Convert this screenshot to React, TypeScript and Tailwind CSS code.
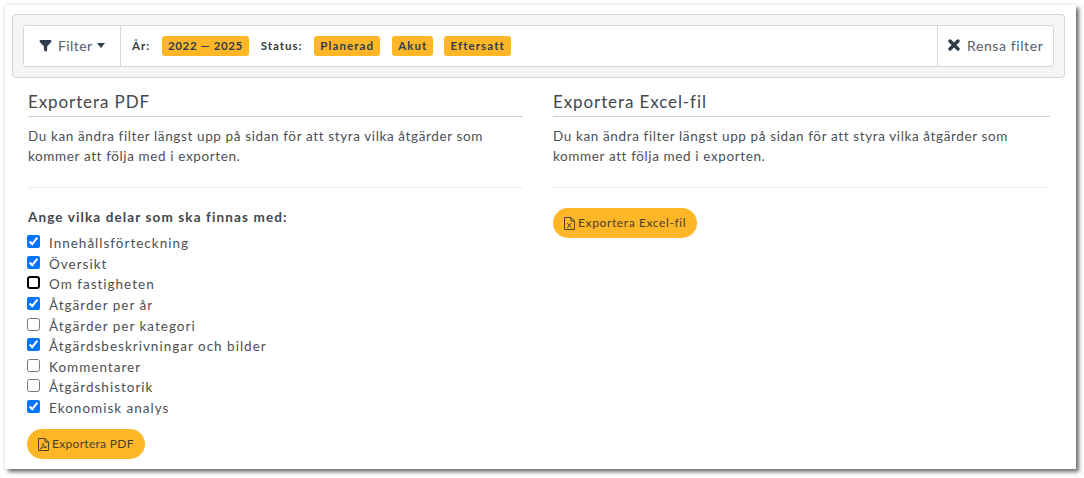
import React from 'react';
import { Filter } from 'lucide-react';

const parts = [
  { label: 'Innehållsförteckning', checked: true },
  { label: 'Översikt', checked: true },
  { label: 'Om fastigheten', checked: false, focused: true },
  { label: 'Åtgärder per år', checked: true },
  { label: 'Åtgärder per kategori', checked: false },
  { label: 'Åtgärdsbeskrivningar och bilder', checked: true },
  { label: 'Kommentarer', checked: false },
  { label: 'Åtgärdshistorik', checked: false },
  { label: 'Ekonomisk analys', checked: true }
];

function Badge({ text, narrow }: { text: string; narrow?: boolean }) {
  return (
    <span className={`h-[20px] px-[6px] flex items-center rounded-[3px] bg-[#ffb727] text-[11.5px] font-bold text-[#2f3c4a] ${narrow ? 'tracking-[0.6px]' : 'tracking-[1.1px]'}`}>
      {text}
    </span>
  );
}

function FileIcon({ kind }: { kind: 'pdf' | 'excel' }) {
  return (
    <svg width="11" height="13" viewBox="0 0 11 13" fill="none" stroke="#4a4028" strokeWidth="1" className="shrink-0">
      <path d="M0.5 0.5H7L10.5 4V12.5H0.5Z" />
      <path d="M7 0.5V4H10.5" />
      {kind === 'pdf' ? (
        <path d="M2.2 10.8C3.6 9.8 5 7.4 5 5.4C5 7.4 6.5 9 8.8 9.2C6.5 9 3.8 9.8 2.2 10.8Z" strokeWidth="0.8" />
      ) : (
        <path d="M3.3 6L7.3 10.8M7.3 6L3.3 10.8" />
      )}
    </svg>
  );
}

function ExportButton({ kind, label }: { kind: 'pdf' | 'excel'; label: string }) {
  return (
    <button className={`h-[30px] px-[11px] flex items-center gap-[3px] rounded-full bg-[#ffb727] text-[12px] text-[#4a4028] ${kind === 'pdf' ? 'tracking-[0.3px]' : 'tracking-[0.62px]'}`}>
      <FileIcon kind={kind} />
      {label}
    </button>
  );
}

function Intro({ title }: { title: string }) {
  return (
    <>
      <h2 className="h-[30px] pt-[3px] text-[17px] leading-[24px] tracking-[0.9px] text-[#43474b] border-b border-[#cfcfcf]">{title}</h2>
      <p className="mt-[9px] text-[13.5px] leading-[20px] tracking-[0.62px] text-[#4c5054]">
        Du kan ändra filter längst upp på sidan för att styra vilka åtgärder som kommer att följa med i exporten.
      </p>
      <hr className="mt-[21px] border-[#eeeeee]" />
    </>
  );
}

function App() {
  return (
    <div className="h-[478px] w-[1084px] pt-[5px] bg-white font-['Lato',sans-serif]">
      <div className="ml-[5px] pt-[9px] px-[7px] w-[1071px] h-[464px] bg-white shadow-[3px_3px_4px_rgba(0,0,0,0.55),0_0_4px_rgba(0,0,0,0.12)]">
        <div className="h-[64px] w-[1053px] p-[10px] rounded-[4px] bg-[#f5f5f5] border border-[#d6d6d6]">
          <div className="h-[42px] flex items-center rounded-[3px] bg-white border border-[#d6d6d6]">
            <div className="w-[97px] h-full flex items-center pl-[15px] pb-[2px] border-r border-[#d6d6d6] text-[14px] tracking-[0.4px] text-[#54606c]">
              <Filter size={13} fill="#2f3c4a" stroke="#2f3c4a" className="mr-[6px]" />
              Filter
              <span className="ml-[5px] border-x-[4px] border-t-[5px] border-x-transparent border-t-[#2f3c4a]" />
            </div>
            <div className="flex-1 flex items-center pl-[11px] text-[11.5px] font-bold tracking-[0.95px] text-[#2f3c4a]">
              <span>År:</span>
              <span className="ml-[12px]"><Badge text="2022 — 2025" narrow /></span>
              <span className="ml-[12px]">Status:</span>
              <span className="ml-[12px]"><Badge text="Planerad" /></span>
              <span className="ml-[12px]"><Badge text="Akut" /></span>
              <span className="ml-[11px]"><Badge text="Eftersatt" /></span>
            </div>
            <div className="w-[116px] h-full flex items-center pl-[10px] pb-[2px] border-l border-[#d6d6d6] text-[14px] tracking-[0.6px] text-[#54606c]">
              <svg width="12" height="12" viewBox="0 0 12 12" stroke="#2f3c4a" strokeWidth="3.4" strokeLinecap="round" className="mr-[7px] shrink-0">
                <path d="M2 2L10 10M10 2L2 10" />
              </svg>
              Rensa filter
            </div>
          </div>
        </div>

        <div className="mt-[9px] pl-[16px] flex">
          <div className="w-[495px]">
            <Intro title="Exportera PDF" />
            <p className="mt-[19px] text-[13.5px] leading-[20px] font-bold tracking-[1.12px] text-[#43474b]">Ange vilka delar som ska finnas med:</p>
            <div className="mt-[6px] flex flex-col">
              {parts.map(part => (
                <label key={part.label} className="h-[20.6px] flex items-center text-[13.5px] tracking-[1px] text-[#4c5054]">
                  <input
                    type="checkbox"
                    defaultChecked={part.checked}
                    className={`w-[13px] h-[13px] -ml-[1px] -mt-[3px] mr-[9px] ${part.focused ? 'appearance-none border-2 border-black rounded-[3px]' : ''}`}
                  />
                  {part.label}
                </label>
              ))}
            </div>
            <div className="mt-[11px] -ml-[1px]">
              <ExportButton kind="pdf" label="Exportera PDF" />
            </div>
          </div>
          <div className="ml-[30px] w-[497px]">
            <Intro title="Exportera Excel-fil" />
            <div className="mt-[20px]">
              <ExportButton kind="excel" label="Exportera Excel-fil" />
            </div>
          </div>
        </div>
      </div>
    </div>
  );
}

export default App;
